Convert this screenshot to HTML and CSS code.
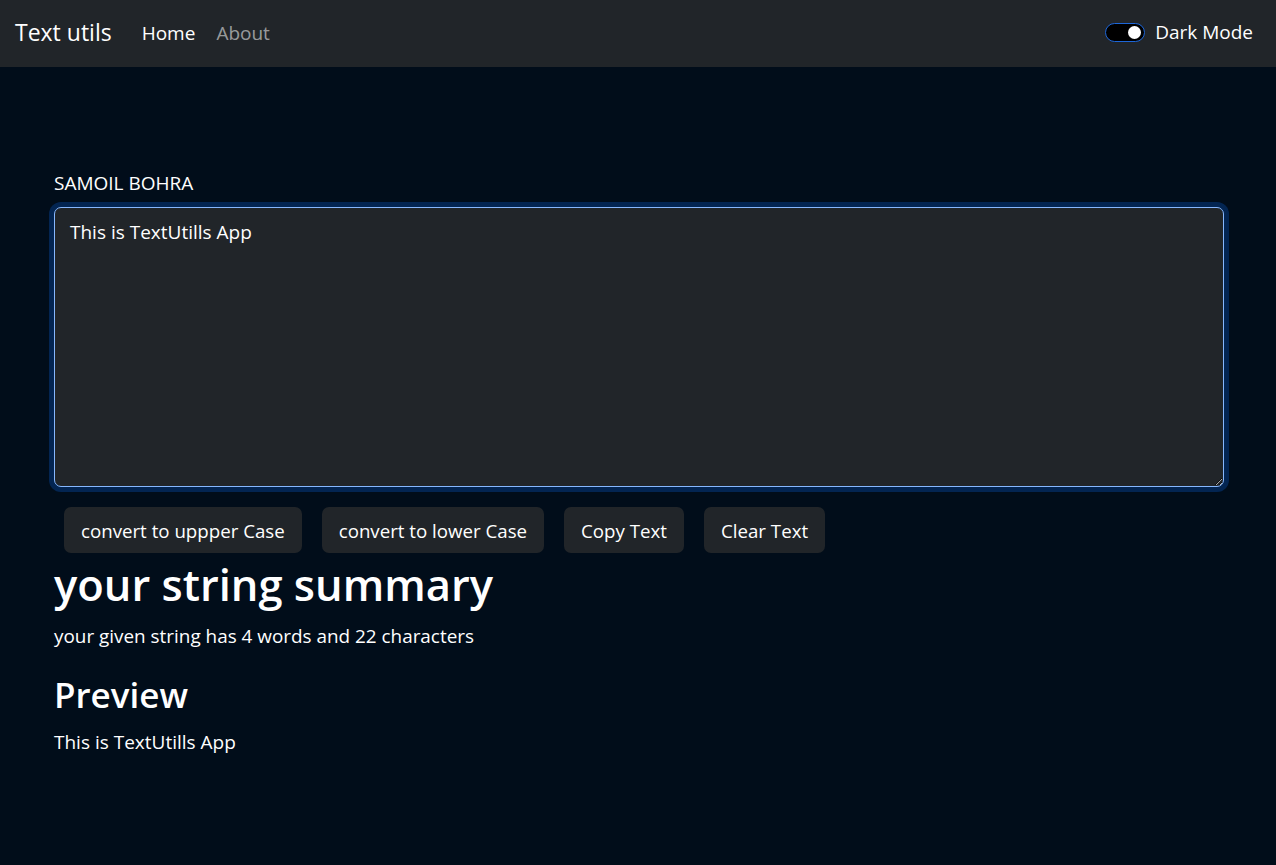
FILE: index.html
```html
<!DOCTYPE html>
<html lang="en">
<head>
<meta charset="utf-8">
<title>Text utils</title>
<link rel="stylesheet" href="styles.css">
</head>
<body>
<nav class="navbar">
  <a class="brand" href="#">Text utils</a>
  <ul class="nav-links">
    <li><a class="nav-link active" href="#">Home</a></li>
    <li><a class="nav-link" href="#">About</a></li>
  </ul>
  <label class="switch">
    <span class="switch-track"><span class="switch-knob"></span></span>
    <span class="switch-label">Dark Mode</span>
  </label>
</nav>
<main class="container">
  <label class="form-label" for="myBox">SAMOIL BOHRA</label>
  <textarea class="form-control" id="myBox">This is TextUtills App</textarea>
  <div class="buttons">
    <button class="btn">convert to uppper Case</button>
    <button class="btn">convert to lower Case</button>
    <button class="btn">Copy Text</button>
    <button class="btn">Clear Text</button>
  </div>
  <h1 class="summary-title">your string summary</h1>
  <p class="summary-text">your given string has 4 words and 22 characters</p>
  <h2 class="preview-title">Preview</h2>
  <p class="preview-text">This is TextUtills App</p>
</main>
</body>
</html>
```
FILE: styles.css
```css
* { box-sizing: border-box; }
html, body { margin: 0; padding: 0; }
body {
  background: #010d1a;
  color: #ffffff;
  font-family: "Open Sans", "Noto Sans", sans-serif;
  font-size: 19px;
  line-height: 1.5;
  height: 865px;
}
.navbar {
  height: 67px;
  background: #212529;
  display: flex;
  align-items: center;
  padding: 0 23px 0 15px;
}
.brand {
  color: #fff;
  text-decoration: none;
  font-size: 23px;
  margin-right: 30px;
  margin-top: -2px;
}
.nav-links {
  list-style: none;
  display: flex;
  margin: 0;
  padding: 0;
  gap: 21px;
  flex: 1;
}
.nav-link {
  color: rgba(255,255,255,0.55);
  text-decoration: none;
  font-size: 19px;
}
.nav-link.active { color: #fff; }
.switch {
  display: flex;
  align-items: center;
  gap: 10px;
  margin-top: -2px;
}
.switch-track {
  width: 40px;
  height: 19px;
  border: 1.5px solid #1d66d8;
  border-radius: 10px;
  background: #000;
  display: flex;
  align-items: center;
  justify-content: flex-end;
  padding-right: 3px;
}
.switch-knob {
  width: 13px;
  height: 13px;
  border-radius: 50%;
  background: #fff;
}
.switch-label { font-size: 19px; }
.container {
  padding: 102px 52px 0 54px;
  display: flex;
  flex-direction: column;
  align-items: flex-start;
}
.form-label {
  font-size: 19px;
  margin-bottom: 9px;
}
.form-control {
  width: 100%;
  height: 280px;
  background: #212529;
  color: #fff;
  border: 1px solid #86b7fe;
  border-radius: 7px;
  box-shadow: 0 0 0 5px rgba(13,110,253,0.25);
  padding: 10px 15px;
  font: inherit;
  font-size: 19px;
  outline: none;
}
.buttons {
  display: flex;
  gap: 20px;
  margin: 20px 0 0 10px;
}
.btn {
  background: #212529;
  color: #fff;
  border: none;
  border-radius: 7px;
  height: 46px;
  padding: 4px 17px 0;
  font: inherit;
  font-size: 18.7px;
}
.summary-title {
  font-size: 43.5px;
  font-weight: 600;
  line-height: 1.2;
  margin: 6px 0 11px;
}
.summary-text {
  margin: 0 0 24px;
  font-size: 18.9px;
}
.preview-title {
  font-size: 35px;
  font-weight: 600;
  line-height: 1.2;
  margin: 0 0 12px;
}
.preview-text { margin: 0; }
```
